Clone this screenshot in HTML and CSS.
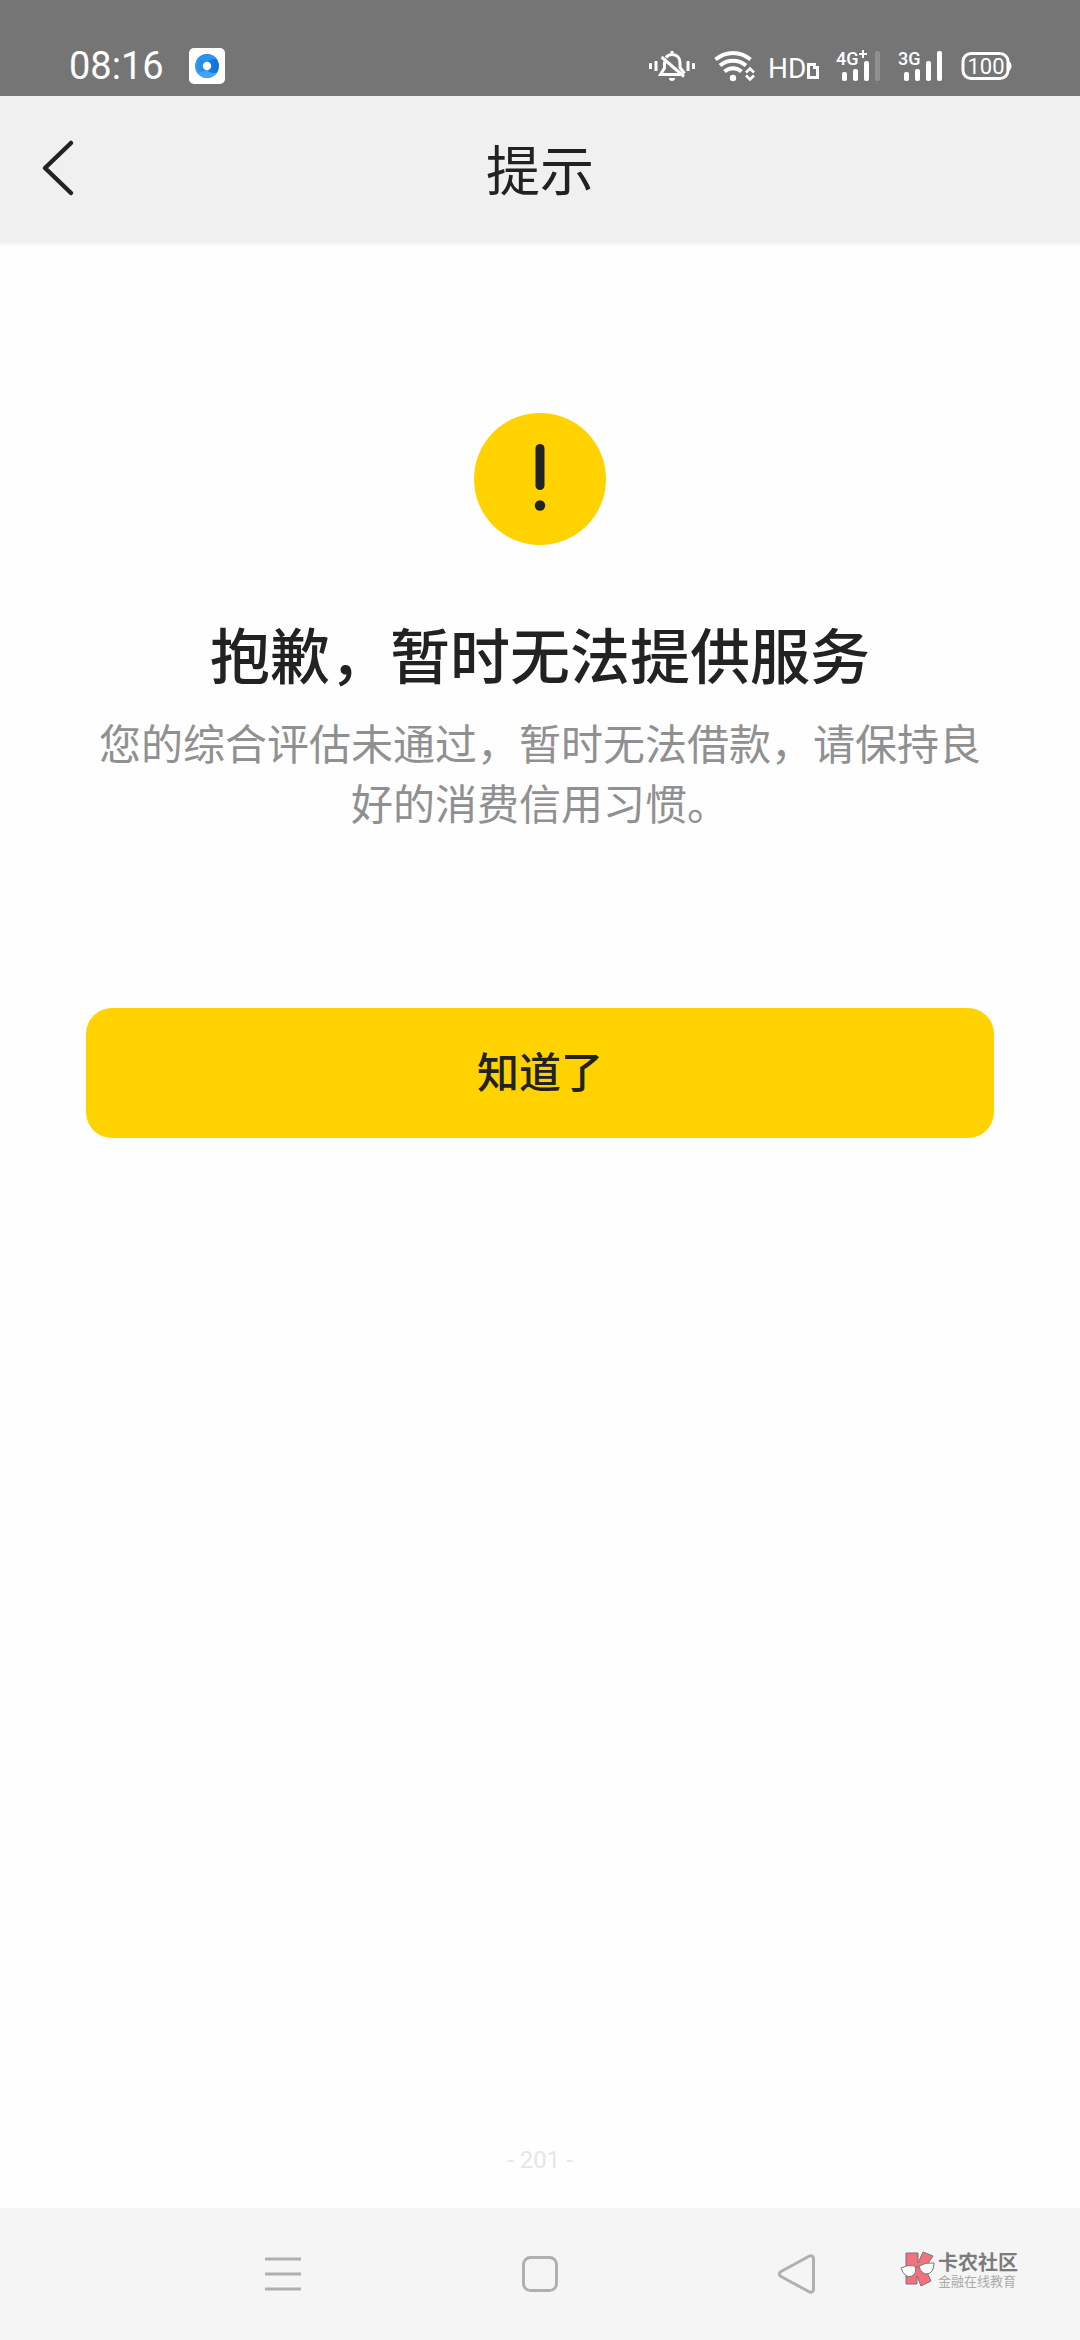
FILE: index.html
```
<!DOCTYPE html>
<html lang="zh-CN">

<head>
    <meta charset="utf-8">
    <meta name="viewport" content="width=device-width, initial-scale=1">
    <title>提示</title>
    <link rel="stylesheet" href="styles.css">
</head>

<body>

<div class="status-bar">
    <span class="time">08:16</span>
    <svg class="app-icon" width="36" height="36" viewBox="0 0 36 36">
        <defs>
            <linearGradient id="ring" x1="0" y1="0" x2="1" y2="0">
                <stop offset="0" stop-color="#3a9bf0"/>
                <stop offset="0.5" stop-color="#1580e4"/>
                <stop offset="1" stop-color="#0c74d8"/>
            </linearGradient>
        </defs>
        <rect width="36" height="36" rx="5" fill="#fff"/>
        <circle cx="18" cy="18" r="12" fill="url(#ring)"/>
        <path d="M8 11.500A12 12 0 0 1 28 11.500Q22 10 18 14Z" fill="#2f92ec"/>
        <path d="M8.500 25A12 12 0 0 0 28 24.500Q21 26 18 22Z" fill="#46a4f6"/>
        <circle cx="18" cy="18" r="4.200" fill="#fff"/>
    </svg>
    <div class="status-icons">
        <!-- muted bell -->
        <svg width="46" height="32" viewBox="0 0 46 32" fill="none" stroke="#fff" stroke-width="3">
            <path d="M1.500 13v6M7 11v10M39 11v10M44.500 13v6"/>
            <path d="M17 7.500C18.500 5.500 20.500 4.500 23 4.500C28 4.500 31 8 31 13V17.500L35.500 23.500"/>
            <path d="M15.500 11.500V18L11.500 24.500H33"/>
            <path d="M12.500 7L35 26.500"/>
            <path d="M23 1v4"/>
            <path d="M20 28h6a3 3 0 0 1-6 0z" fill="#fff" stroke="none"/>
        </svg>
        <!-- wifi -->
        <svg class="wifi" width="42" height="32" viewBox="0 0 42 32" fill="none" stroke="#fff" stroke-width="4">
            <path d="M1.500 9.500C12 .700 26 .700 36.500 9.500"/>
            <path d="M6 15.500C13.500 9 24.500 9 32 15.500"/>
            <path d="M10.500 21.500C15.500 17 22.500 17 27.500 21.500"/>
            <circle cx="19" cy="28" r="3.200" fill="#fff" stroke="none"/>
            <path d="M32 22.500L36 18.500L40 22.500M32 25.500L36 29.500L40 25.500" stroke-width="2.600"/>
        </svg>
        <!-- HD call -->
        <svg class="hd" width="50" height="32" viewBox="0 0 50 32">
            <text x="-2" y="28" font-size="28">HD</text>
            <path d="M38.500 14.500h6v3h3v10h-9z" fill="none" stroke="#fff" stroke-width="3"/>
        </svg>
        <!-- sim 1 -->
        <svg class="signal" width="46" height="32" viewBox="0 0 46 32">
            <text x="0" y="15" font-size="18">4G</text>
            <path d="M23 4h8M27 0v8" stroke="#fff" stroke-width="2"/>
            <rect x="6" y="22" width="5" height="9" rx="2"/>
            <rect x="17" y="19" width="5" height="12" rx="2"/>
            <rect x="28" y="11" width="5" height="20" rx="2"/>
            <rect x="39" y="1" width="5" height="30" rx="2" opacity=".2"/>
        </svg>
        <!-- sim 2 -->
        <svg class="signal" width="46" height="32" viewBox="0 0 46 32">
            <text x="0" y="15" font-size="18">3G</text>
            <rect x="6" y="22" width="5" height="9" rx="2"/>
            <rect x="17" y="19" width="5" height="12" rx="2"/>
            <rect x="28" y="11" width="5" height="20" rx="2"/>
            <rect x="39" y="1" width="5" height="30" rx="2"/>
        </svg>
        <!-- battery -->
        <svg class="battery" width="51" height="32" viewBox="0 0 51 32">
            <rect x="2" y="3.500" width="45" height="25" rx="8" fill="none" stroke="#fff" stroke-width="3"/>
            <path d="M47.500 11q3 1.500 3 5t-3 5z" fill="#fff"/>
            <text x="25" y="24" font-size="22" text-anchor="middle">100</text>
        </svg>
    </div>
</div>

<header class="header">
    <button type="button" class="back" aria-label="返回">
        <svg width="32" height="56" viewBox="0 0 32 56" fill="none" stroke="#222" stroke-width="4.500" stroke-linecap="round" stroke-linejoin="round">
            <path d="M29 3L3 28L29 53"/>
        </svg>
    </button>
    <h1>提示</h1>
</header>

<main class="content">
    <svg class="warn" width="132" height="132" viewBox="0 0 132 132">
        <circle cx="66" cy="66" r="66" fill="#ffd200"/>
        <rect x="61.500" y="31" width="9" height="46" rx="4.500" fill="#222"/>
        <circle cx="66" cy="92.500" r="5.200" fill="#222"/>
    </svg>
    <h2>抱歉，暂时无法提供服务</h2>
    <p class="reason">您的综合评估未通过，暂时无法借款，请保持良好的消费信用习惯。</p>
    <button type="button" class="confirm">知道了</button>
    <p class="code">- 201 -</p>
</main>

<nav class="nav-bar">
    <button type="button" aria-label="菜单">
        <svg width="40" height="44" viewBox="0 0 40 44" stroke="#b0b0b0" stroke-width="3">
            <path d="M2 7h36M2 22h36M2 37h36"/>
        </svg>
    </button>
    <button type="button" aria-label="主页">
        <svg width="40" height="44" viewBox="0 0 40 44" fill="none" stroke="#b0b0b0" stroke-width="3">
            <rect x="3.500" y="5.500" width="33" height="33" rx="7"/>
        </svg>
    </button>
    <button type="button" aria-label="返回">
        <svg width="40" height="44" viewBox="0 0 40 44" fill="none" stroke="#b0b0b0" stroke-width="3" stroke-linejoin="round">
            <path d="M32.500 4L4 19.500Q.500 22 4 24.500L32.500 40Q36.500 41 36.500 37V7Q36.500 3 32.500 4Z"/>
        </svg>
    </button>
    <div class="brand">
        <svg width="36" height="36" viewBox="0 0 36 36" stroke="#777" stroke-linejoin="round">
            <path d="M6 2H18V12L23 1L33 5L25 17L31 30L21 35L17 25V33H6Z" fill="#f3707c"/>
            <path d="M1 17Q8 13 15 15Q17 23 12 25Q5 28 1 17Z" fill="#fff"/>
            <path d="M19 15Q26 11 34 12Q34 22 27 23Q21 23 19 15Z" fill="#fff"/>
            <path d="M15 17Q17 15 19 16" fill="none"/>
        </svg>
        <div class="brand-text">
            <strong>卡农社区</strong>
            <span>金融在线教育</span>
        </div>
    </div>
</nav>

</body>

</html>
```
FILE: styles.css
```
* {
    box-sizing: border-box;
}
body {
    margin: 0;
    min-height: 100vh;
    display: flex;
    flex-direction: column;
    background: #fefefe;
    color: #222;
    font-family: "Noto Sans CJK SC", sans-serif;
}
h1, h2, p {
    margin: 0;
}
svg {
    display: block;
    flex: none;
    overflow: visible;
}
button {
    padding: 0;
    border: 0;
    background: none;
    color: inherit;
    font-family: inherit;
}

/* status bar */
.status-bar {
    display: flex;
    align-items: center;
    height: 96px;
    padding: 36px 68px 0 69px;
    background: #757575;
    color: #fff;
}
.time {
    font: 38px/40px Roboto, sans-serif;
}
.app-icon {
    margin-left: 25px;
}
.status-icons {
    display: flex;
    align-items: center;
    margin-left: auto;
}
.status-icons text {
    fill: #fff;
    font-family: Roboto, sans-serif;
}
.wifi {
    margin-left: 19px;
}
.hd {
    margin-left: 14px;
}
.signal {
    margin-left: 16px;
    fill: #fff;
}
.signal text {
    font-weight: 500;
}
.battery {
    margin-left: 17px;
}

/* title bar */
.header {
    display: grid;
    grid-template-columns: 1fr auto 1fr;
    align-items: center;
    height: 144px;
    padding: 0 42px;
    background: #f0f0f0;
}
.back {
    justify-self: start;
}
h1 {
    font-size: 54px;
    line-height: 80px;
    font-weight: 400;
}

/* message */
.content {
    flex: 1;
    display: flex;
    flex-direction: column;
    align-items: center;
    padding: 173px 86px 32px;
    background: linear-gradient(#ebebeb, #fefefe 7px);
}
h2 {
    margin-top: 64px;
    font-size: 60px;
    line-height: 88px;
    font-weight: 500;
}
.reason {
    margin-top: 15px;
    padding: 0 12px;
    color: #909090;
    font-size: 42px;
    line-height: 60px;
    text-align: center;
}
.confirm {
    width: 100%;
    height: 130px;
    margin-top: 176px;
    padding-bottom: 8px;
    border-radius: 26px;
    background: #ffd200;
    font-size: 42px;
    font-weight: 500;
}
.code {
    margin-top: auto;
    color: #e6e6e6;
    font: 24px/32px Roboto, sans-serif;
}

/* system navigation */
.nav-bar {
    position: relative;
    display: flex;
    height: 132px;
    padding: 0 154px;
    background: #f5f5f5;
}
.nav-bar button {
    flex: 1;
    display: flex;
    align-items: center;
    justify-content: center;
}
.brand {
    position: absolute;
    right: 62px;
    top: 43px;
    display: flex;
    gap: 2px;
}
.brand-text {
    display: flex;
    flex-direction: column;
    color: #7c7c7c;
}
.brand-text strong {
    font-size: 20px;
    line-height: 22px;
    font-weight: 700;
}
.brand-text span {
    color: #aaa;
    font-size: 13px;
    line-height: 16px;
}
```
